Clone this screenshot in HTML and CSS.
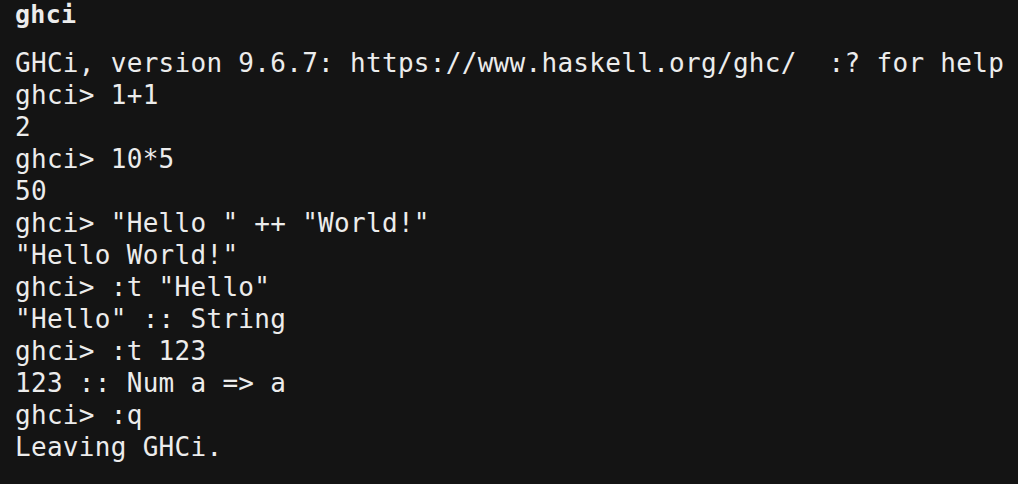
FILE: index.html
```html
<!DOCTYPE html>
<html>
<head>
<meta charset="utf-8">
<link rel="stylesheet" href="styles.css">
</head>
<body>
<div class="term">
  <div class="title">ghci</div>
  <pre class="out">GHCi, version 9.6.7: https://www.haskell.org/ghc/  :? for help
ghci&gt; 1+1
2
ghci&gt; 10*5
50
ghci&gt; "Hello " ++ "World!"
"Hello World!"
ghci&gt; :t "Hello"
"Hello" :: String
ghci&gt; :t 123
123 :: Num a =&gt; a
ghci&gt; :q
Leaving GHCi.</pre>
</div>
</body>
</html>
```
FILE: styles.css
```css
html, body {
  margin: 0;
  padding: 0;
  background: #141414;
  width: 1018px;
  height: 484px;
  overflow: hidden;
}
.term {
  padding: 0 0 0 15px;
  font-family: "DejaVu Sans Mono", monospace;
  color: #ececec;
  font-size: 26px;
}
.title {
  font-weight: bold;
  line-height: 32px;
  margin-top: -1px;
  font-size: 25px;
  letter-spacing: 0.3px;
}
.out {
  margin: 16px 0 0 0;
  font-family: inherit;
  font-size: 26px;
  line-height: 32px;
  letter-spacing: 0.3px;
  white-space: pre;
}
```
